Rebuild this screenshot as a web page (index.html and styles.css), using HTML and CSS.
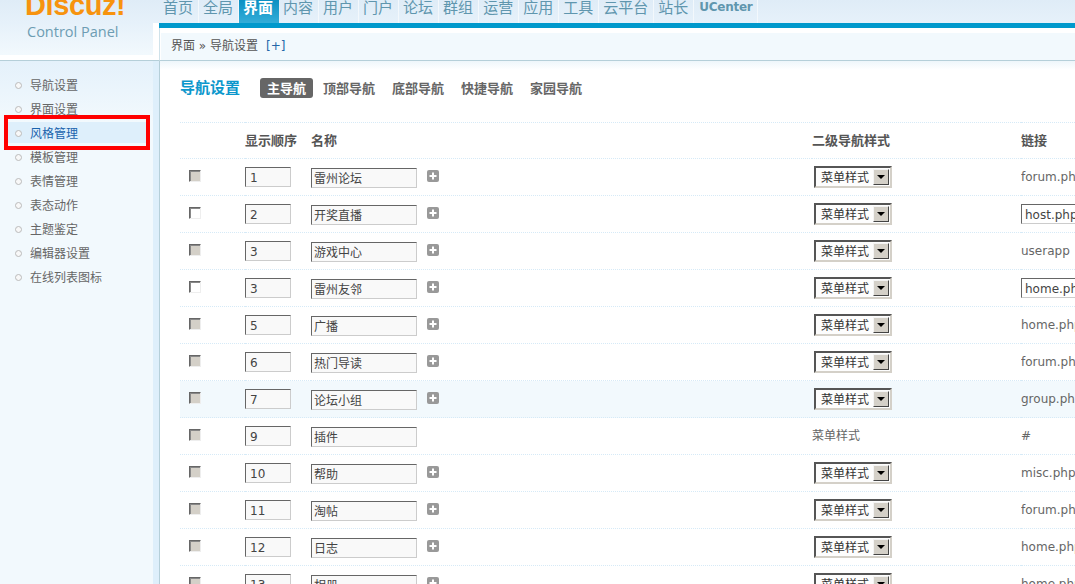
FILE: index.html
```
<!DOCTYPE html>
<html lang="zh">
<head>
<meta charset="utf-8">
<title>Discuz! Control Panel</title>
<link rel="stylesheet" href="styles.css">
</head>
<body>
<div class="app">
  <header class="brand">
    <div class="logo">Discuz!</div>
    <div class="logo-sub">Control Panel</div>
  </header>
  <div class="top">
    <nav class="nav">
      <a>首页</a><a>全局</a><a class="on">界面</a><a>内容</a><a>用户</a><a>门户</a><a>论坛</a><a>群组</a><a>运营</a><a>应用</a><a>工具</a><a>云平台</a><a>站长</a><a class="latin">UCenter</a>
    </nav>
    <div class="crumb-wrap">
      <div class="crumb">界面 » 导航设置<span class="add">[+]</span></div>
    </div>
  </div>
  <aside class="side">
    <ul class="menu">
      <li><i></i>导航设置</li>
      <li><i></i>界面设置</li>
      <li class="on"><i></i>风格管理</li>
      <li><i></i>模板管理</li>
      <li><i></i>表情管理</li>
      <li><i></i>表态动作</li>
      <li><i></i>主题鉴定</li>
      <li><i></i>编辑器设置</li>
      <li><i></i>在线列表图标</li>
    </ul>
    <div class="mark"></div>
  </aside>
  <main class="main">
    <div class="heading">
      <h1>导航设置</h1>
      <div class="tabs"><a class="on">主导航</a><a>顶部导航</a><a>底部导航</a><a>快捷导航</a><a>家园导航</a></div>
    </div>
    <table class="grid">
      <colgroup><col class="c1"><col class="c2"><col class="c3"><col class="c4"><col class="c5"></colgroup>
      <thead>
        <tr><th></th><th>显示顺序</th><th>名称</th><th>二级导航样式</th><th>链接</th></tr>
      </thead>
      <tbody>
        <tr><td><input class="chk" type="checkbox" disabled></td><td><input class="ord" value="1"></td><td><div class="nm"><input class="name" value="雷州论坛"><svg class="plus" viewBox="0 0 12 12"><rect width="12" height="12" rx="2"/><path d="M6 2.5v7M2.5 6h7"/></svg></div></td><td><div class="sel"><span>菜单样式</span><b></b></div></td><td>forum.php</td></tr>
        <tr><td><input class="chk" type="checkbox"></td><td><input class="ord" value="2"></td><td><div class="nm"><input class="name" value="开奖直播"><svg class="plus" viewBox="0 0 12 12"><rect width="12" height="12" rx="2"/><path d="M6 2.5v7M2.5 6h7"/></svg></div></td><td><div class="sel"><span>菜单样式</span><b></b></div></td><td><input class="url" value="host.php"></td></tr>
        <tr><td><input class="chk" type="checkbox" disabled></td><td><input class="ord" value="3"></td><td><div class="nm"><input class="name" value="游戏中心"><svg class="plus" viewBox="0 0 12 12"><rect width="12" height="12" rx="2"/><path d="M6 2.5v7M2.5 6h7"/></svg></div></td><td><div class="sel"><span>菜单样式</span><b></b></div></td><td>userapp</td></tr>
        <tr><td><input class="chk" type="checkbox"></td><td><input class="ord" value="3"></td><td><div class="nm"><input class="name" value="雷州友邻"><svg class="plus" viewBox="0 0 12 12"><rect width="12" height="12" rx="2"/><path d="M6 2.5v7M2.5 6h7"/></svg></div></td><td><div class="sel"><span>菜单样式</span><b></b></div></td><td><input class="url" value="home.php"></td></tr>
        <tr><td><input class="chk" type="checkbox" disabled></td><td><input class="ord" value="5"></td><td><div class="nm"><input class="name" value="广播"><svg class="plus" viewBox="0 0 12 12"><rect width="12" height="12" rx="2"/><path d="M6 2.5v7M2.5 6h7"/></svg></div></td><td><div class="sel"><span>菜单样式</span><b></b></div></td><td>home.php</td></tr>
        <tr><td><input class="chk" type="checkbox" disabled></td><td><input class="ord" value="6"></td><td><div class="nm"><input class="name" value="热门导读"><svg class="plus" viewBox="0 0 12 12"><rect width="12" height="12" rx="2"/><path d="M6 2.5v7M2.5 6h7"/></svg></div></td><td><div class="sel"><span>菜单样式</span><b></b></div></td><td>forum.php</td></tr>
        <tr class="hover"><td><input class="chk" type="checkbox" disabled></td><td><input class="ord" value="7"></td><td><div class="nm"><input class="name" value="论坛小组"><svg class="plus" viewBox="0 0 12 12"><rect width="12" height="12" rx="2"/><path d="M6 2.5v7M2.5 6h7"/></svg></div></td><td><div class="sel"><span>菜单样式</span><b></b></div></td><td>group.php</td></tr>
        <tr><td><input class="chk" type="checkbox" disabled></td><td><input class="ord" value="9"></td><td><div class="nm"><input class="name" value="插件"></div></td><td>菜单样式</td><td>#</td></tr>
        <tr><td><input class="chk" type="checkbox" disabled></td><td><input class="ord" value="10"></td><td><div class="nm"><input class="name" value="帮助"><svg class="plus" viewBox="0 0 12 12"><rect width="12" height="12" rx="2"/><path d="M6 2.5v7M2.5 6h7"/></svg></div></td><td><div class="sel"><span>菜单样式</span><b></b></div></td><td>misc.php</td></tr>
        <tr><td><input class="chk" type="checkbox" disabled></td><td><input class="ord" value="11"></td><td><div class="nm"><input class="name" value="淘帖"><svg class="plus" viewBox="0 0 12 12"><rect width="12" height="12" rx="2"/><path d="M6 2.5v7M2.5 6h7"/></svg></div></td><td><div class="sel"><span>菜单样式</span><b></b></div></td><td>forum.php</td></tr>
        <tr><td><input class="chk" type="checkbox" disabled></td><td><input class="ord" value="12"></td><td><div class="nm"><input class="name" value="日志"><svg class="plus" viewBox="0 0 12 12"><rect width="12" height="12" rx="2"/><path d="M6 2.5v7M2.5 6h7"/></svg></div></td><td><div class="sel"><span>菜单样式</span><b></b></div></td><td>home.php</td></tr>
        <tr><td><input class="chk" type="checkbox" disabled></td><td><input class="ord" value="13"></td><td><div class="nm"><input class="name" value="相册"><svg class="plus" viewBox="0 0 12 12"><rect width="12" height="12" rx="2"/><path d="M6 2.5v7M2.5 6h7"/></svg></div></td><td><div class="sel"><span>菜单样式</span><b></b></div></td><td>home.php</td></tr>
      </tbody>
    </table>
  </main>
</div>
</body>
</html>
```
FILE: styles.css
```
* { box-sizing: border-box; }
html, body { margin: 0; height: 100%; overflow: hidden; }
body { font: 12px/1.5 "DejaVu Sans", "Noto Sans CJK SC", sans-serif; color: #666; background: #fff; }

.app { display: grid; grid-template-columns: 159px 1fr; grid-template-rows: 61px 1fr; width: 1075px; height: 584px; overflow: hidden; }

/* brand */
.brand { height: 61px; padding-left: 25px; overflow: hidden; border-bottom: 1px solid #b5cfd9; background: linear-gradient(#dfecf7, #e6f1fa) 0 0 / 100% 23px no-repeat, linear-gradient(#e6f1fa 0, #f2f9fd 32px) 0 23px / 153px 32px no-repeat, #fff; }
.logo { margin-top: -9px; height: 29px; font: bold 29px/29px "Liberation Sans", sans-serif; letter-spacing: -0.4px; color: #f7930e; }
.logo-sub { margin: 4px 0 0 2px; font: 14.5px/16px "Open Sans", sans-serif; color: #6d9db3; }

/* top */
.top { display: flex; flex-direction: column; min-width: 0; }
.nav { display: flex; height: 28px; border-bottom: 5px solid #0099cc; background: linear-gradient(#dfecf7, #e6f1fa); }
.nav a { padding: 0 5px 0 4px; height: 23px; font: 15px/13px "Noto Sans CJK SC", sans-serif; color: #5f96ae; border-right: 1px solid #f3f8fc; }
.nav a.on { color: #fff; font-weight: bold; border-right-color: transparent; background: linear-gradient(#0a90c3, #33add8); }
.nav a.latin { padding-left: 5px; font: bold 12px/15px "DejaVu Sans", sans-serif; letter-spacing: -0.25px; }
.crumb-wrap { flex: 1; padding: 5px 0 0 1px; border-left: 1px solid #cfe2ea; border-bottom: 1px solid #b5cfd9; background: #fff; }
.crumb { height: 27px; padding-left: 10px; line-height: 27px; color: #555; background: #f2f9fd; }
.add { margin-left: 8px; color: #2366a8; }

/* sidebar */
.side { position: relative; padding-top: 13px; background: linear-gradient(#e4f1fb, #f2f9fd 60px); border-right: 6px solid #deeffb; }
.menu { margin: 0; padding: 0; list-style: none; }
.menu li { display: flex; align-items: center; height: 24px; padding-left: 15px; }
.menu li i { width: 7px; height: 7px; margin: -2px 8px 0 0; border: 1px solid #bbb; border-radius: 50%; background: #f8f8f8; }
.menu li.on { color: #1a63ad; background: linear-gradient(#deeffb, #deeffb) 5px 0 / 142px 21px no-repeat; }
.mark { position: absolute; left: 4px; top: 54px; width: 146px; height: 35px; border: 4px solid #f00; }

/* main */
.main { min-width: 0; padding: 17px 0 0 20px; overflow: hidden; border-left: 1px solid #b5cfd9; background: linear-gradient(#eef6fb, #fff 9px); }
.heading { display: flex; align-items: center; height: 20px; margin-bottom: 24px; }
.heading h1 { width: 80px; margin: 0; padding-bottom: 2px; font: bold 15px/18px "Noto Sans CJK SC", sans-serif; color: #0b97cc; }
.tabs { display: flex; gap: 3px; }
.tabs a { padding: 0 7px; font: bold 13px/20px "Noto Sans CJK SC", sans-serif; color: #666; border-radius: 3px; }
.tabs a.on { color: #fff; background: #666; }

/* table */
.grid { table-layout: fixed; width: 1141px; border-collapse: separate; border-spacing: 0; }
.c1 { width: 65px; } .c2 { width: 66px; } .c3 { width: 501px; } .c4 { width: 209px; } .c5 { width: 300px; }
.grid th { height: 37px; padding: 0 0 2px; text-align: left; font: bold 13px/16px "Noto Sans CJK SC", sans-serif; color: #555; border-top: 1px dotted #d6eaf7; border-bottom: 1px dotted #d6eaf7; }
.grid td { height: 37px; padding: 0; white-space: nowrap; overflow: hidden; border-bottom: 1px dotted #d6eaf7; }
.grid td:first-child { padding-left: 9px; }
.hover td { background: #f2f9fd; }

input { font: 12px "DejaVu Sans", "Noto Sans CJK SC", sans-serif; color: #444; outline: 0; }
.chk { appearance: none; display: block; width: 12px; height: 12px; margin: -2px 0 0; border: 1px solid; border-color: #666 #eee #eee #666; box-shadow: inset 1px 1px 0 #888; background: #fff; }
.chk:disabled { background: #d4d0c8; }
.ord, .name, .url { display: block; height: 20px; padding: 1px 3px 0; border: 1px solid; border-color: #666 #ccc #ccc #666; background: #f9f9f9; }
.ord { width: 46px; padding-left: 4px; }
.name { width: 106px; margin-top: 2px; padding: 0 3px 1px 2px; }
.url { width: 100px; background: #fff; }
.nm { display: flex; align-items: center; }
.plus { width: 12px; height: 12px; margin: -2px 0 0 10px; }
.plus rect { fill: #999; }
.plus path { stroke: #fff; stroke-width: 2; fill: none; }

.sel { display: flex; align-items: center; justify-content: space-between; width: 78px; height: 22px; margin-left: 2px; padding: 0 1px 0 5px; border: 2px solid; border-color: #555 #d4d0c8 #d4d0c8 #555; background: #fdfdfd; color: #333; line-height: 18px; }
.sel span { padding-top: 1px; }
.sel b { position: relative; width: 16px; height: 16px; background: #d4d0c8; border: 1px solid; border-color: #f4f4f4 #444 #444 #f4f4f4; }
.sel b::after { content: ""; position: absolute; left: 3px; top: 5px; border: 4px solid transparent; border-top: 4px solid #000; border-bottom: 0; }
```
